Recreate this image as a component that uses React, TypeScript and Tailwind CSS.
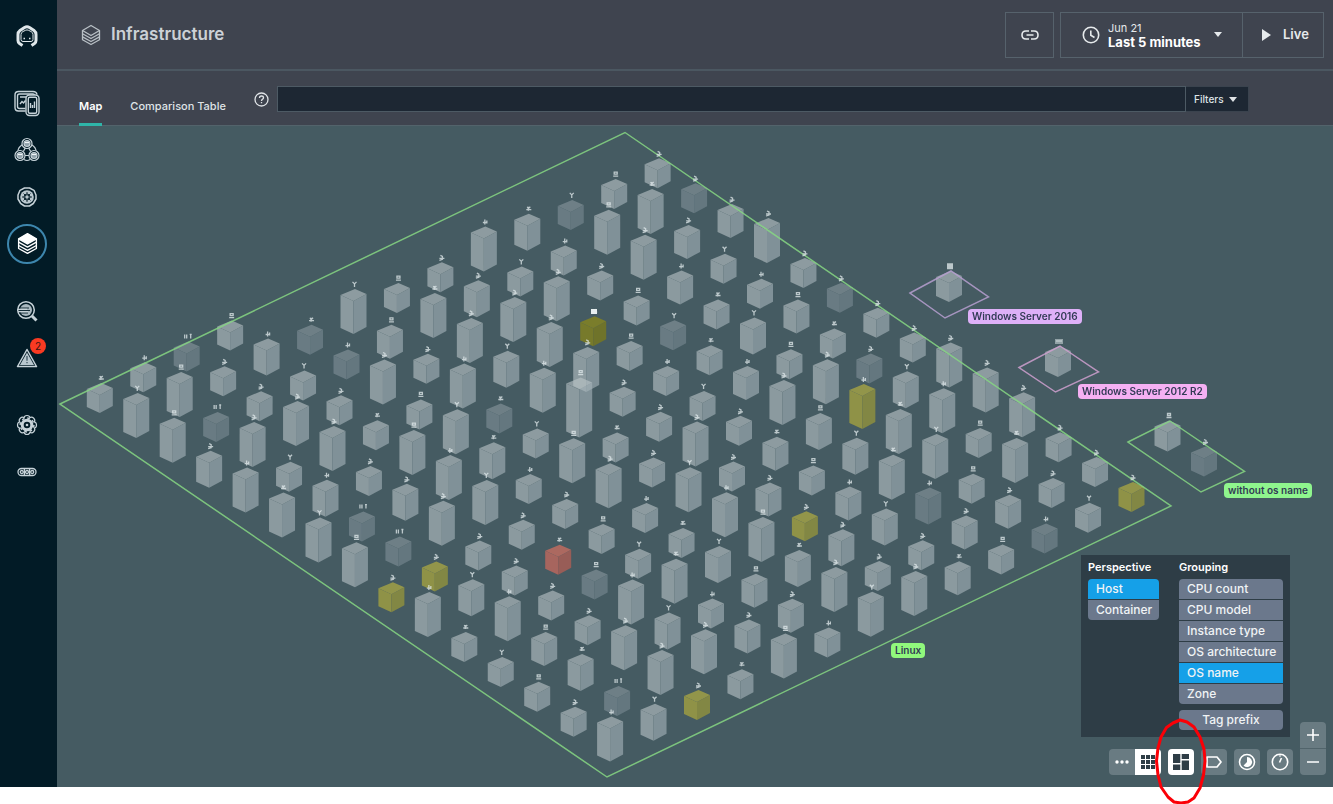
import React, { useState } from "react";

type Tone = "normal" | "dark" | "yellow" | "olive" | "red";

// One string per row; letters give the block height, suffixes the health tone.
const ROWS: string[] = [
  "s s sd s",
  "t t s m sd t s s t m sd s s",
  "t sd s s sd n t m s s t t sd",
  "m t t s t s t t t s t n n",
  "t s t s s t m t so s n s t",
  "t m s t t sd t t s sd s s s",
  "t sd m t m s g s s s m n sd",
  "t sd t t s t s s s n s s s",
  "sy sy s s s t s t s t t sd s",
  "t m s sr s s t s n m ty m t",
  "s t s sd s s t n s m t t t",
  "s n s t t m t sy n t t s t",
  "s m t m s n m m m md s t s",
  "s sd t t n n t s s n n s s",
  "t m sy s t s t t n s sd s sy",
];

const HEIGHTS: Record<string, number> = { s: 18, n: 22, m: 25, t: 33, g: 48 };
const TONES: Record<string, Tone> = { d: "dark", y: "yellow", o: "olive", r: "red" };

const FACES: Record<Tone, { top: string; left: string; right: string; opacity: number }> = {
  normal: { top: "#bdc7ca", left: "#bac4c8", right: "#a8b6bc", opacity: 0.6 },
  dark: { top: "#73848b", left: "#6d7f87", right: "#687b83", opacity: 0.9 },
  yellow: { top: "#979949", left: "#939546", right: "#868a43", opacity: 0.95 },
  olive: { top: "#7a7d2b", left: "#777a2b", right: "#6f732a", opacity: 1 },
  red: { top: "#b26a60", left: "#ad665e", right: "#9d5e57", opacity: 0.95 },
};

const MARKS: string[] = [
  "M-2 3h5M-1 0l1 2l2-2M0 0v4",
  "M-1 0h3v2h-3zM-2 4h5",
  "M0 0v5M-2 3h4M2 1v3",
  "M-2 0l2 2l2-2M0 2v3",
  "M-1 0l2 1v3l-3 1M-2 3h5",
];
const MARK_DARK = "M-3 0v4M-1 0v4M2 0h2M3 0v4";

interface Block {
  x: number;
  y: number;
  h: number;
  tone: Tone;
  mark: string;
}

const blocks: Block[] = ROWS.flatMap((row, i) =>
  row
    .split(" ")
    .map((code, j) => ({
      x: 99.8 + 36.45 * i + 43.45 * j,
      y: 413 + 24.9 * i - 20.8 * j,
      h: HEIGHTS[code[0]],
      tone: code[1] ? TONES[code[1]] : ("normal" as Tone),
      mark: code[1] === "d" && j < 3 ? MARK_DARK : MARKS[(i * 3 + j * 7 + i * j) % 5],
    }))
    .reverse(),
);

const outside: Block[] = [
  { x: 949, y: 302, h: 19, tone: "normal", mark: "M-3 0h6M-3 1.500h6M-3 3h6M-3 4.500h6" },
  { x: 1058, y: 377, h: 19, tone: "normal", mark: "M-3 0v5M-1 0v5M1 0v5M3 0v5M-3 2h6" },
  { x: 1167.5, y: 451.5, h: 19, tone: "normal", mark: MARKS[1] },
  { x: 1204, y: 476.5, h: 18, tone: "dark", mark: MARKS[4] },
];

function Cube({ x, y, h, tone }: Block) {
  const f = FACES[tone];
  return (
    <g transform={`translate(${x} ${y})`} opacity={f.opacity}>
      <path fill={f.left} d={`M0 0l-13-6v${-h}l13 6z`} />
      <path fill={f.right} d={`M0 0l13-7v${-h}l-13 7z`} />
      <path fill={f.top} d={`M0 ${-h}l-13-6l14.500-6l11.500 5z`} />
    </g>
  );
}

function Marks({ items }: { items: Block[] }) {
  return (
    <g fill="none" stroke="#dfe8ea" strokeWidth="1.300" opacity="0.78">
      {items.map((b, k) => (
        <path key={k} transform={`translate(${b.x + 1} ${b.y - b.h - 19})`} d={b.mark} />
      ))}
    </g>
  );
}

function InfraMap() {
  return (
    <svg
      className="absolute left-0 top-0"
      width="1276"
      height="661"
      viewBox="57 126 1276 661"
      role="img"
      aria-label="Host map"
    >
      {blocks.map((b, k) => (
        <Cube key={k} {...b} />
      ))}
      {outside.map((b, k) => (
        <Cube key={k} {...b} />
      ))}
      <g fill="none" strokeWidth="1.5" opacity="0.85">
        <path stroke="#86d683" d="M60 404L625 132.500L1171 506L607 777Z" />
        <path stroke="#b79fd0" d="M910 293L951 271L988.500 297L945 318Z" />
        <path stroke="#cfa0cf" d="M1019 367.500L1060 346L1098.500 372L1055.500 392Z" />
        <path stroke="#86d683" d="M1128 442L1170 421L1244.500 471.500L1201 492Z" />
      </g>
      <Marks items={blocks} />
      <Marks items={outside} />
      <rect x="591" y="309" width="6" height="5" fill="#e8eff0" />
    </svg>
  );
}

const MAP_LABELS = [
  { text: "Windows Server 2016", cls: "left-[911px] top-[183px] bg-[#deb0f8]" },
  { text: "Windows Server 2012 R2", cls: "left-[1021px] top-[258px] bg-[#f5b0f3]" },
  { text: "without os name", cls: "left-[1167px] top-[357px] bg-[#8ff58d]" },
  { text: "Linux", cls: "left-[834px] top-[517px] bg-[#90f87c]" },
];

function StackIcon({ size, solid = false }: { size: number; solid?: boolean }) {
  return (
    <svg width={size} height={size} viewBox="0 0 22 22" fill="none" stroke="currentColor" strokeWidth="1.3" strokeLinejoin="round">
      <path d="M11 1.500L19.500 6.500L11 11.500L2.500 6.500Z" fill={solid ? "currentColor" : "none"} />
      <path d="M2.500 6.500V15.800L11 20.500L19.500 15.800V6.500" />
      <path d="M2.500 9.700L11 14.500L19.500 9.700M2.500 12.900L11 17.500L19.500 12.900" />
    </svg>
  );
}

function LogoIcon() {
  return (
    <svg width="24" height="24" viewBox="0 0 24 24" fill="none" stroke="#dfe7ea">
      <path strokeWidth="3" d="M7.500 21.500L4.500 19.500Q3 18.500 3 16.500V10.500Q3 8 5 6.500L9.500 3.500Q12 2 14.500 3.500L19 6.500Q21 8 21 10.500V16.500Q21 18.500 19.500 19.500L16.500 21.500" />
      <path strokeWidth="1" d="M8 17.500Q6 17.500 6 15.500V10.500Q6 8.500 8 7.500L10.500 6.300Q12 5.500 13.500 6.300L16 7.500Q18 8.500 18 10.500V15.500Q18 17.500 16 17.500Z" />
      <path strokeWidth="1.600" d="M8.500 14.500H10M14 14.500H15.500" />
    </svg>
  );
}

function ScreensIcon() {
  return (
    <svg width="28" height="28" viewBox="0 0 28 28" fill="none" stroke="#c6d2d8" strokeWidth="1.400">
      <path d="M12.500 22H5.500Q2 22 2 18.500V6Q2 2.500 5.500 2.500H20Q23.500 2.500 24 5.500" />
      <path d="M12.500 19.500H6.500Q4.500 19.500 4.500 17.500V7Q4.500 5 6.500 5H20Q21.500 5 21.500 6" />
      <path d="M7 8H13M7 15L9 12.500L10.500 14L12.500 11.500" />
      <rect x="13" y="6" width="13" height="20.500" rx="3.500" />
      <rect x="15.300" y="8.300" width="8.400" height="16" rx="1.500" />
      <path d="M17.500 19V14M19.500 19V16M21.500 19V12.500" />
    </svg>
  );
}

function ClusterIcon() {
  return (
    <svg width="28" height="26" viewBox="0 0 28 26" fill="none" stroke="#c6d2d8" strokeWidth="1.200">
      <path d="M9.500 7.500Q5 10.500 5 14M18.500 7.500Q23 10.500 23 14M11 22.500Q14 24.500 17 22.500M12.300 11L10.300 14.500M15.700 11L17.700 14.500M11.500 18.500H16.500" />
      {[
        [14, 6.500],
        [7, 18.500],
        [21, 18.500],
      ].map(([cx, cy]) => (
        <g key={cx}>
          <circle cx={cx} cy={cy} r="5" fill="#021b26" />
          <circle cx={cx} cy={cy} r="3" fill="#8fa0a9" />
          <path d={`M${cx - 2} ${cy - 1}h4`} stroke="#f0f5f7" />
        </g>
      ))}
    </svg>
  );
}

function KubeIcon() {
  return (
    <svg width="22" height="22" viewBox="0 0 22 22" fill="none" stroke="#c6d2d8">
      <path strokeWidth="1.500" strokeLinejoin="round" d="M8.500 2H13.500L18 4.300L20 9V13L17.300 17.500L13.500 20H8.500L4.700 17.500L2 13V9L4 4.300Z" />
      <circle cx="11" cy="11" r="6.800" fill="#b9c7ce" stroke="none" />
      <g stroke="#142c37" strokeWidth="1">
        <circle cx="11" cy="11" r="3" />
        <path d="M11 6V16M6 11H16M7.500 7.500L14.500 14.500M14.500 7.500L7.500 14.500" />
      </g>
      <circle cx="11" cy="11" r="1.200" fill="#b9c7ce" stroke="none" />
    </svg>
  );
}

function SearchIcon() {
  return (
    <svg width="22" height="22" viewBox="0 0 22 22" fill="none" stroke="#c6d2d8">
      <circle cx="10" cy="10" r="8.300" strokeWidth="1.500" />
      <circle cx="10" cy="10" r="6" fill="#a9b8bf" stroke="none" />
      <path stroke="#142c37" strokeWidth="1" d="M3 8H13M3 10.500H14M3 13H12" />
      <path strokeWidth="1.200" d="M2 9.300H11M2 11.700H12" />
      <path strokeWidth="3" d="M16 16L20.500 20.500" />
    </svg>
  );
}

function WarnIcon() {
  return (
    <svg width="22" height="20" viewBox="0 0 22 20" fill="none" stroke="#c6d2d8" strokeLinejoin="round">
      <path strokeWidth="1.500" d="M11 1.500L20.500 18.500H1.500Z" />
      <path fill="#b9c7ce" stroke="none" d="M11 4.500L18 17H4Z" />
      <path stroke="#4a606b" strokeWidth="1.400" d="M11 8V12.800M11 14V15.300" />
    </svg>
  );
}

function GearIcon() {
  return (
    <svg width="22" height="22" viewBox="0 0 22 22" fill="none" stroke="#c6d2d8">
      {[0, 45, 90, 135, 180, 225, 270, 315].map((a) => (
        <path key={a} transform={`rotate(${a} 11 11)`} strokeWidth="1.200" d="M8 3.800Q8.300 1.500 11 1.500Q13.700 1.500 14 3.800" />
      ))}
      <circle cx="11" cy="11" r="4.800" strokeWidth="3" />
      <circle cx="11" cy="11" r="6.900" strokeWidth="1.500" strokeDasharray="2.700 2.720" />
      <circle cx="11" cy="11" r="1.300" fill="#c6d2d8" stroke="none" />
    </svg>
  );
}

function MoreIcon() {
  return (
    <svg width="20" height="10" viewBox="0 0 20 10" fill="none" stroke="#c6d2d8" strokeWidth="1.300">
      <rect x="1" y="1.500" width="18" height="7" rx="3.500" />
      <circle cx="4.800" cy="5" r="1.500" />
      <circle cx="10" cy="5" r="1.500" />
      <circle cx="15.200" cy="5" r="1.500" />
      <path d="M7.400 2V8M12.600 2V8" />
    </svg>
  );
}

function NavItem({ label, active = false, children }: { label: string; active?: boolean; children: React.ReactNode }) {
  return (
    <a href="#" aria-label={label} className="flex h-[47px] items-center justify-center text-white">
      <span
        className={
          active
            ? "flex size-10 items-center justify-center rounded-full border-2 border-[#3d86ad]"
            : "relative flex items-center justify-center"
        }
      >
        {children}
      </span>
    </a>
  );
}

function Sidebar() {
  return (
    <nav className="flex w-[57px] shrink-0 flex-col gap-5 bg-[#021b26] pr-[3px]">
      <div>
        <a href="#" aria-label="Home" className="mb-[7px] flex h-[72px] items-center justify-center">
          <LogoIcon />
        </a>
        <NavItem label="Websites"><ScreensIcon /></NavItem>
        <NavItem label="Applications"><ClusterIcon /></NavItem>
        <NavItem label="Kubernetes"><KubeIcon /></NavItem>
        <NavItem label="Infrastructure" active><StackIcon size={23} solid /></NavItem>
      </div>
      <div>
        <NavItem label="Analytics"><SearchIcon /></NavItem>
        <NavItem label="Events">
          <WarnIcon />
          <span className="absolute -right-2 -top-2.5 flex size-4 items-center justify-center rounded-full bg-[#f93a22] text-[10px] leading-none text-[#3a1512]">
            2
          </span>
        </NavItem>
      </div>
      <div>
        <NavItem label="Settings"><GearIcon /></NavItem>
        <NavItem label="More"><MoreIcon /></NavItem>
      </div>
    </nav>
  );
}

function Caret() {
  return (
    <svg width="8" height="5" viewBox="0 0 8 5" fill="currentColor">
      <path d="M0 0H8L4 5Z" />
    </svg>
  );
}

function Header() {
  return (
    <header className="flex h-[71px] items-center border-b-2 border-[#4b5761] pl-[23px] pr-[9px] text-[#e6eaec]">
      <span className="text-[#b9c0c6]"><StackIcon size={22} /></span>
      <h1 className="ml-[9px] flex-1 text-[17px] font-semibold text-[#ccd1d6]">Infrastructure</h1>
      <button aria-label="Copy link" className="flex h-[46px] w-[49px] items-center justify-center border border-[#56626c]">
        <svg width="18" height="10" viewBox="0 0 18 10" fill="none" stroke="currentColor" strokeWidth="1.600">
          <path d="M8 1H5Q1 1 1 5Q1 9 5 9H8M10 1H13Q17 1 17 5Q17 9 13 9H10M5.500 5H12.500" />
        </svg>
      </button>
      <div className="ml-1.5 flex h-[46px] border border-[#56626c]">
        <button className="flex w-[182px] items-center border-r border-[#56626c] pl-[21px] text-left">
          <svg width="18" height="18" viewBox="0 0 18 18" fill="none" stroke="currentColor" strokeWidth="1.600">
            <circle cx="9" cy="9" r="7.700" />
            <path d="M8.800 4.500V9.300L12.500 11.500" />
          </svg>
          <span className="ml-2 flex flex-col">
            <span className="text-[11px] leading-[14px]">Jun 21</span>
            <span className="text-[13px] font-bold leading-[14px] text-white">Last 5 minutes</span>
          </span>
          <span className="ml-[13px]"><Caret /></span>
        </button>
        <button className="flex w-20 items-center gap-3 pl-[19px] text-[13px] font-semibold">
          <svg width="9" height="12" viewBox="0 0 9 12" fill="currentColor">
            <path d="M0 0L9 6L0 12Z" />
          </svg>
          Live
        </button>
      </div>
    </header>
  );
}

function TabBar() {
  return (
    <div className="flex h-[55px] items-start border-b border-[#53636b] pl-[22px] pr-[84px] text-[11px] font-medium text-[#dfe3e6]">
      <a href="#" className="flex h-[55px] items-center border-b-[3px] border-[#2fb5a9] pt-[18px] font-semibold text-white">Map</a>
      <a href="#" className="ml-7 flex h-[55px] items-center border-b-[3px] border-transparent pt-[18px]">Comparison Table</a>
      <button aria-label="Help" className="ml-7 mt-[21px]">
        <svg width="15" height="15" viewBox="0 0 15 15" fill="none" stroke="currentColor" strokeWidth="1.300">
          <circle cx="7.500" cy="7.500" r="6.500" />
          <path d="M5.500 6Q5.500 4 7.500 4Q9.500 4 9.500 5.800Q9.500 6.800 8.300 7.400Q7.500 7.900 7.500 9M7.500 10V11.300" />
        </svg>
      </button>
      <input aria-label="Search hosts" className="ml-2 mt-[15px] h-[26px] min-w-0 flex-1 border border-[#4d5a64] bg-[#1d2733] px-2 outline-none" />
      <button className="mt-[15px] flex h-[26px] w-[63px] items-center gap-[5px] border border-l-0 border-[#3a434e] bg-[#1d2733] pl-2 text-[10px]">
        Filters <Caret />
      </button>
    </div>
  );
}

function OptionButton({ label, selected, center = false, onClick }: { label: string; selected: boolean; center?: boolean; onClick: () => void }) {
  return (
    <button
      onClick={onClick}
      aria-pressed={selected}
      className={`h-5 whitespace-nowrap pl-2 text-xs font-medium leading-5 text-[#f0f3f5] ${center ? "pr-2 text-center" : "text-left"} ${selected ? "bg-[#15a0e8]" : "bg-[#6b788c]"}`}
    >
      {label}
    </button>
  );
}

const PERSPECTIVES = ["Host", "Container"];
const GROUPINGS = ["CPU count", "CPU model", "Instance type", "OS architecture", "OS name", "Zone"];

function GroupingPanel() {
  const [perspective, setPerspective] = useState("Host");
  const [grouping, setGrouping] = useState("OS name");
  return (
    <section className="flex gap-5 bg-[#2e3d46] px-[7px] pb-[7px] text-white">
      <div className="w-[71px]">
        <h2 className="h-6 text-[11px] font-semibold leading-6">Perspective</h2>
        <div className="flex flex-col gap-px overflow-hidden rounded-sm">
          {PERSPECTIVES.map((p) => (
            <OptionButton key={p} label={p} selected={p === perspective} onClick={() => setPerspective(p)} />
          ))}
        </div>
      </div>
      <div className="w-[104px]">
        <h2 className="h-6 text-[11px] font-semibold leading-6">Grouping</h2>
        <div className="flex flex-col gap-px overflow-hidden rounded-sm">
          {GROUPINGS.map((g) => (
            <OptionButton key={g} label={g} selected={g === grouping} onClick={() => setGrouping(g)} />
          ))}
        </div>
        <div className="mt-1.5 flex flex-col overflow-hidden rounded-sm">
          <OptionButton label="Tag prefix" selected={false} center onClick={() => setGrouping("Tag prefix")} />
        </div>
      </div>
    </section>
  );
}

function ToolButton({ label, light = false, children }: { label: string; light?: boolean; children: React.ReactNode }) {
  return (
    <button
      aria-label={label}
      className={`flex size-[26px] items-center justify-center ${light ? "bg-white text-[#2e3d46]" : "bg-[#697b82] text-white"}`}
    >
      {children}
    </button>
  );
}

function Toolbar() {
  return (
    <div className="flex items-end gap-[7px]">
      <div className="flex overflow-hidden rounded-sm">
        <ToolButton label="List view">
          <svg width="14" height="4" viewBox="0 0 14 4" fill="currentColor">
            <circle cx="2" cy="2" r="1.700" /><circle cx="7" cy="2" r="1.700" /><circle cx="12" cy="2" r="1.700" />
          </svg>
        </ToolButton>
        <ToolButton label="Grid view" light>
          <svg width="14" height="14" viewBox="0 0 14 14" fill="currentColor">
            {[0, 5, 10].map((x) => [0, 5, 10].map((y) => <rect key={`${x}-${y}`} x={x} y={y} width="4" height="4" />))}
          </svg>
        </ToolButton>
      </div>
      <div className="overflow-hidden rounded-sm">
        <ToolButton label="Grouping" light>
          <svg width="16" height="16" viewBox="0 0 16 16" fill="currentColor">
            <path d="M0 0H7.300V9H0zM8.700 0H16V5H8.700zM0 10.500H7.300V16H0zM8.700 6.500H16V16H8.700z" />
          </svg>
        </ToolButton>
      </div>
      <div className="overflow-hidden rounded-sm">
        <ToolButton label="Tags">
          <svg width="16" height="12" viewBox="0 0 16 12" fill="none" stroke="currentColor" strokeWidth="1.700" strokeLinejoin="round">
            <path d="M1 1H11L15 6L11 11H1Z" />
          </svg>
        </ToolButton>
      </div>
      <div className="overflow-hidden rounded-sm">
        <ToolButton label="Health">
          <svg width="18" height="18" viewBox="0 0 18 18" fill="none" stroke="currentColor" strokeWidth="1.600">
            <circle cx="9" cy="9" r="7.500" />
            <path fill="currentColor" stroke="none" d="M9 4A5 5 0 1 1 5.500 12.500L9 9Z" />
          </svg>
        </ToolButton>
      </div>
      <div className="overflow-hidden rounded-sm">
        <ToolButton label="Metric">
          <svg width="18" height="18" viewBox="0 0 18 18" fill="none" stroke="currentColor" strokeWidth="1.600">
            <circle cx="9" cy="9" r="7.700" />
            <path d="M8.500 9.500L10.500 5" />
            <path strokeWidth="1" d="M9 2V4" />
          </svg>
        </ToolButton>
      </div>
      <div className="flex flex-col overflow-hidden rounded-sm">
        <div className="border-b border-[#51646b]">
          <ToolButton label="Zoom in">
            <svg width="12" height="12" viewBox="0 0 12 12" stroke="currentColor" strokeWidth="1.600"><path d="M0 6H12M6 0V12" /></svg>
          </ToolButton>
        </div>
        <ToolButton label="Zoom out">
          <svg width="12" height="12" viewBox="0 0 12 12" stroke="currentColor" strokeWidth="1.600"><path d="M0 6H12" /></svg>
        </ToolButton>
      </div>
    </div>
  );
}

export default function App() {
  return (
    <div className="min-h-screen bg-white pb-[17px] font-['Inter',sans-serif]">
      <div className="flex min-h-[calc(100vh-17px)]">
        <Sidebar />
        <main className="flex min-w-0 flex-1 flex-col bg-[#3f444f]">
          <Header />
          <TabBar />
          <div className="relative min-h-[661px] flex-1 bg-[#455b62]">
            <InfraMap />
            {MAP_LABELS.map((l) => (
              <span
                key={l.text}
                className={`absolute whitespace-nowrap rounded-sm px-1 text-[10px] font-semibold leading-[15px] text-[#323a55] ${l.cls}`}
              >
                {l.text}
              </span>
            ))}
            <div className="absolute bottom-3 right-[7px] flex flex-col items-end">
              <div className="mr-9">
                <GroupingPanel />
              </div>
              <div className="-mt-[15px]">
                <Toolbar />
              </div>
              <svg className="pointer-events-none absolute -bottom-[29px] right-[119px]" width="52" height="86" viewBox="0 0 52 86" fill="none" stroke="#fb0007" strokeWidth="3" strokeLinejoin="round">
                <path d="M25 2L32 4L39 9L45 19L49 31L50 43L48.500 57L45 70L39 80L33 84L26 85L19 84L13 79L6 69L3 57L1.500 43L3 30L6 19L11.500 9.500L18 5Z" />
              </svg>
            </div>
          </div>
        </main>
      </div>
    </div>
  );
}
